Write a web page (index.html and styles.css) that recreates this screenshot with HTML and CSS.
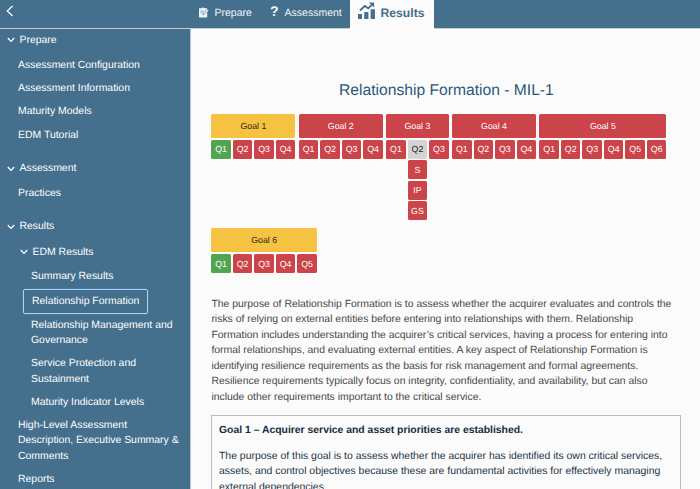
FILE: index.html
```html
<!DOCTYPE html>
<html lang="en">
<head>
<meta charset="utf-8">
<title>Relationship Formation</title>
<link rel="stylesheet" href="styles.css">
</head>
<body>
<div class="app">
  <header class="topbar">
    <div class="back"><svg width="8" height="12" viewBox="0 0 8 12"><path d="M6.6 1 1.2 6l5.4 5" fill="none" stroke="#fff" stroke-width="1.2"/></svg></div>
    <nav class="tabs">
      <a class="tab prepare"><svg width="10" height="11" viewBox="0 0 10 11"><path d="M0 1.2h2.4a1.6 1.2 0 0 1 3 0h2.7v1L4 6.3 3.5 8.2l2-.4L8.2 5v5.6H0z" fill="#eef3f7"/><path d="M4.7 6.2 8.5 2.4l1.1 1.1-3.8 3.8-1.4.3z" fill="#eef3f7"/><path d="M1.5 4h3M1.5 5.8h2" stroke="#446f8d" stroke-width=".6"/></svg><span>Prepare</span></a>
      <a class="tab assess"><b class="question">?</b><span>Assessment</span></a>
      <a class="tab active"><svg width="18" height="17" viewBox="0 0 18 17"><path d="M0 12h4v5H0zM6.2 10h4.2v7H6.2zM12.6 7.3H17V17h-4.4z" fill="#446f8d"/><path d="M2 8.5 6.8 4l3.4 2.3L14 2.6" fill="none" stroke="#446f8d" stroke-width="1.8"/><path d="M10.8.6h5.3v5z" fill="#446f8d"/></svg><span>Results</span></a>
    </nav>
  </header>
  <div class="body">
    <aside class="sidebar">
      <div class="item group"><svg class="chev" viewBox="0 0 8 6"><path d="m.8 1 3.2 3.4L7.2 1"/></svg><span>Prepare</span></div>
      <div class="item">Assessment Configuration</div>
      <div class="item">Assessment Information</div>
      <div class="item">Maturity Models</div>
      <div class="item">EDM Tutorial</div>
      <div class="item group section"><svg class="chev" viewBox="0 0 8 6"><path d="m.8 1 3.2 3.4L7.2 1"/></svg><span>Assessment</span></div>
      <div class="item">Practices</div>
      <div class="item group section"><svg class="chev" viewBox="0 0 8 6"><path d="m.8 1 3.2 3.4L7.2 1"/></svg><span>Results</span></div>
      <div class="item group nested"><svg class="chev" viewBox="0 0 8 6"><path d="m.8 1 3.2 3.4L7.2 1"/></svg><span>EDM Results</span></div>
      <div class="item deep">Summary Results</div>
      <div class="item selected">Relationship Formation</div>
      <div class="item deep">Relationship Management and<br>Governance</div>
      <div class="item deep">Service Protection and<br>Sustainment</div>
      <div class="item deep">Maturity Indicator Levels</div>
      <div class="item">High-Level Assessment<br>Description, Executive Summary &amp;<br>Comments</div>
      <div class="item">Reports</div>
    </aside>
    <main class="content">
      <h1>Relationship Formation - MIL-1</h1>
      <div class="goals">
        <div class="goal"><div class="head yellow">Goal 1</div><div class="row"><i class="green">Q1</i><i>Q2</i><i>Q3</i><i>Q4</i></div></div>
        <div class="goal"><div class="head">Goal 2</div><div class="row"><i>Q1</i><i>Q2</i><i>Q3</i><i>Q4</i></div></div>
        <div class="goal"><div class="head">Goal 3</div><div class="row"><i>Q1</i><div class="stack"><i class="grey">Q2</i><i>S</i><i>IP</i><i>GS</i></div><i>Q3</i></div></div>
        <div class="goal"><div class="head">Goal 4</div><div class="row"><i>Q1</i><i>Q2</i><i>Q3</i><i>Q4</i></div></div>
        <div class="goal"><div class="head">Goal 5</div><div class="row"><i>Q1</i><i>Q2</i><i>Q3</i><i>Q4</i><i>Q5</i><i>Q6</i></div></div>
        <div class="goal"><div class="head yellow">Goal 6</div><div class="row"><i class="green">Q1</i><i>Q2</i><i>Q3</i><i>Q4</i><i>Q5</i></div></div>
      </div>
      <p class="intro">The purpose of Relationship Formation is to assess whether the acquirer evaluates and controls the<br>risks of relying on external entities before entering into relationships with them. Relationship<br>Formation includes understanding the acquirer’s critical services, having a process for entering into<br>formal relationships, and evaluating external entities. A key aspect of Relationship Formation is<br>identifying resilience requirements as the basis for risk management and formal agreements.<br>Resilience requirements typically focus on integrity, confidentiality, and availability, but can also<br>include other requirements important to the critical service.</p>
      <section class="card">
        <h2>Goal 1 – Acquirer service and asset priorities are established.</h2>
        <p>The purpose of this goal is to assess whether the acquirer has identified its own critical services,<br>assets, and control objectives because these are fundamental activities for effectively managing<br>external dependencies.</p>
      </section>
    </main>
  </div>
</div>
</body>
</html>
```
FILE: styles.css
```css
* { box-sizing: border-box; }
body { margin: 0; font-family: "Liberation Sans", Arial, sans-serif; background: #fbfbfb; }
.app { width: 700px; height: 489px; overflow: hidden; display: flex; flex-direction: column; white-space: nowrap; text-rendering: geometricPrecision; }
.topbar { height: 29px; flex: none; display: flex; background: #446f8d; border-bottom: 1px solid #c3d0da; }
.back { width: 198px; padding: 4px 0 0 6px; }
.tabs { display: flex; color: #f2f6f8; font-size: 10.5px; }
.tab { height: 29px; display: flex; align-items: center; padding-bottom: 4px; }
.prepare { width: 72px; gap: 5.5px; padding-left: 1px; }
.assess { width: 80px; gap: 6px; }
.question { font-size: 14px; line-height: 14px; margin-top: -3px; }
.active { width: 84px; background: #fbfbfb; color: #446f8d; font-weight: bold; font-size: 12.2px; padding-left: 8px; gap: 4.5px; }
.active svg { margin-top: -4px; }
.body { flex: 1; min-height: 0; display: flex; }
.sidebar { width: 191px; flex: none; background: #446f8d; border-right: 1px solid #b9c8d3; color: #fff; font-size: 10.45px; line-height: 15.4px; padding-top: 3.6px; }
.item { padding-left: 18px; margin-bottom: 7.9px; }
.group { padding-left: 7px; display: flex; align-items: center; gap: 4.5px; margin-bottom: 9.7px; }
.chev { width: 8px; height: 6px; fill: none; stroke: #fff; stroke-width: 1.3; }
.section { margin-top: 18px; }
.nested { padding-left: 20px; margin-bottom: 9px; }
.deep { padding-left: 31px; margin-bottom: 7.7px; }
.selected { width: 125px; height: 25px; margin: -3px 0 3.7px 23px; padding: 4px 0 0 8px; border: 1px solid #b9cfe4; border-radius: 2px; box-shadow: 0 0 0 1px #3e78b5; }
.content { flex: 1; padding: 52px 0 0 20.4px; }
h1 { margin: 0; width: 470px; text-align: center; color: #2c587a; font-size: 15.65px; line-height: 20px; font-weight: normal; }
.goals { display: flex; flex-wrap: wrap; width: 460px; column-gap: 3.4px; row-gap: 8px; margin-top: 12.7px; }
.goal { display: flex; flex-direction: column; gap: 2px; font-size: 8.8px; color: #fff; }
.head { height: 24.3px; display: flex; align-items: center; justify-content: center; background: #cb444a; border-radius: 1.5px; }
.yellow { background: #f5c242; color: #302914; }
.row { display: flex; gap: 2px; align-items: flex-start; }
.row i { width: 19.5px; height: 19px; flex: none; display: flex; align-items: center; justify-content: center; font-style: normal; background: #cb444a; border-radius: 1.5px; }
.row .green { background: #52a550; }
.row .grey { background: #d4d4d4; color: #222; }
.stack { display: flex; flex-direction: column; gap: 1.4px; }
.intro { margin: 23.4px 0 10.3px; color: #484848; font-size: 10.435px; line-height: 15.45px; }
.card { width: 470px; height: 100px; border: 1px solid #bcbcbc; padding: 7px 6.6px; color: #1d3345; font-size: 10.43px; line-height: 15.45px; }
.card h2 { margin: 0 0 10px; font-size: 10.4px; line-height: 15.45px; color: #162c3c; }
.card p { margin: 0; }
```
